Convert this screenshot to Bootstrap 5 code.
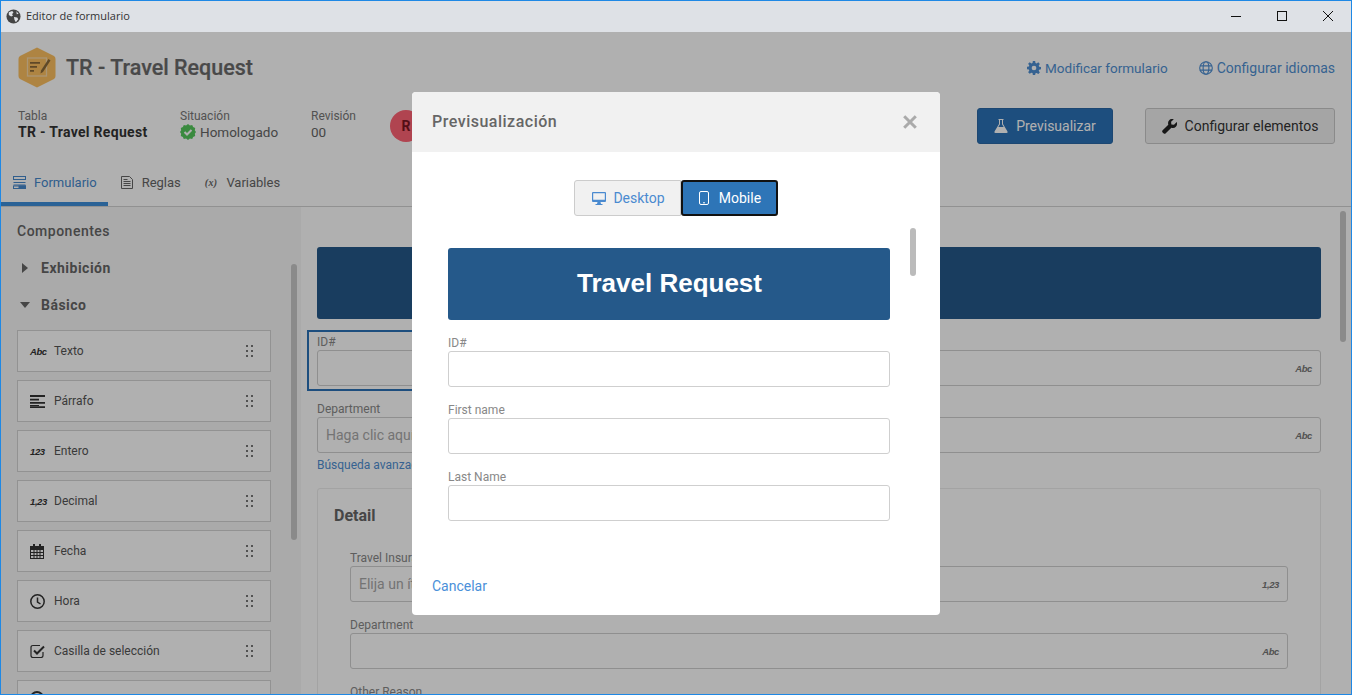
<!DOCTYPE html>
<html lang="es">
<head>
<meta charset="utf-8">
<title>Editor de formulario</title>
<link href="https://cdn.jsdelivr.net/npm/bootstrap@5.3.0/dist/css/bootstrap.min.css" rel="stylesheet">
<style>
html,body{height:100%;margin:0;overflow:hidden}
body{font-family:Roboto,"Liberation Sans",sans-serif;font-size:14px;color:#555;background:#fff}
a{text-decoration:none}
svg{display:block;flex:none}
.win{height:695px;border:1px solid #1e88e5;overflow:hidden;display:flex;flex-direction:column}
.tbar{height:31px;flex:none;background:#dee1e6;color:#333;font-family:"Open Sans","Liberation Sans",sans-serif;font-size:11px;padding:0 0 1px 5px;gap:5px}
.tbar-ctrls{gap:36px;padding-right:18px}
.app{flex:1;min-height:0;position:relative;display:flex;flex-direction:column;background:#fff}
.hd{padding:15px 16px 0 17px;flex:none}
.hd-top{height:41px}
.hd-title{font-size:21.5px;font-weight:500;color:#6b6b6b;line-height:40px;margin-left:10px;padding-top:1px;-webkit-text-stroke:.2px #6b6b6b}
.lnk{color:#4f8fd2;font-size:14px;padding-top:1px}
.lnk-n{font-size:13.5px}
.lnk+.lnk{margin-left:31px}
.meta-row{margin-top:20px;height:36px}
.meta{line-height:16px;font-size:13.5px;color:#666}
.meta small{display:block;font-size:12px;color:#777;line-height:16px}
.meta b{font-weight:700;font-size:14px;color:#333;letter-spacing:.3px}
.m1{width:162px}.m2{width:131px}.m3{width:79px}
.avatar{width:32px;height:32px;border-radius:50%;background:#ff6374;color:#7a1522;font-weight:700;margin-top:2px}
.tool{height:36px;font-size:14px;padding:0;border-radius:3px;gap:8px;white-space:nowrap;--bs-btn-border-radius:3px}
.tool-p{background:#2b72b7;border-color:#2a68a6;color:#fff;width:136px}
.tool-s{background:#f0f0f0;border-color:#c9c9c9;color:#333;width:190px;margin-left:32px}
.tabs{margin-top:21px;height:42px;flex:none;border-bottom:1px solid #d2d2d2}
.tab-i{height:41px;color:#666;padding:0 12px 6px 13px;gap:9px;font-size:13px}
.tab-i.act{color:#4688cc;border-bottom:4px solid #3e8ed9;padding:0 11px 2px 12px;gap:8px}
.tab-v{padding-left:12px}
.tab-x{font-family:"Liberation Serif",serif;font-style:italic;font-weight:700;font-size:10px;color:#666;letter-spacing:.3px}
.bodyrow{flex:1;min-height:0;display:flex}
.side{width:300px;flex:none;background:#f7f7f7;padding:15px 16px 0;position:relative;overflow:hidden}
.side-h{font-weight:500;letter-spacing:.5px;color:#666;line-height:18px;margin-bottom:19px}
.grp{font-weight:700;letter-spacing:.5px;color:#666;line-height:18px;gap:0;margin-bottom:19px}
.grp svg{margin-left:4px;margin-right:12px}
.grp-last{margin-bottom:16px}
.grp-last svg{margin-left:3px;margin-right:11px}
.it{width:254px;height:42px;background:#fff;border:1px solid #d4d4d4;margin-bottom:8px;padding:0 16px 0 12px;font-size:12px;color:#555}
.it-ic{width:24px;font:italic 700 9.5px "Liberation Sans",sans-serif;letter-spacing:-.4px;color:#333;display:flex;align-items:center;flex:none}
.it-cut{padding-top:10px}
.thumb{position:absolute;width:6px;background:#c8c8c8;border-radius:3px}
.th1{left:290px;top:57px;height:276px}
.th2{left:1039px;top:4px;height:131px}
.cont{flex:1;min-width:0;background:#fff;position:relative;overflow:hidden;padding:40px 30px 0 16px}
.bnr{height:72px;background:#25598a;border-radius:3px}
.fld{font-size:12px;line-height:16px;color:#888}
.inp{height:36px;border:1px solid #cfcfcf;border-radius:3px;background:#fff;color:#a8a8a8;font-size:14px;padding:0 8px;gap:8px}
.inp-ic{font:italic 700 9.5px "Liberation Sans",sans-serif;letter-spacing:-.4px;color:#777;margin-left:auto}
.focus-box{border:2px solid #2b72b7;padding:2px 0 3px 8px;margin:11px 0 0 -10px;width:350px;flex:none}
.r1{gap:0}
.r1-rest{flex:1;padding-top:31px}
.dep{margin-top:10px}
.adv{color:#4f8fd2;font-size:12px;line-height:16px;margin-top:4px}
.det{margin-top:15px;border:1px solid #ececec;border-radius:3px;padding:16px 32px 0 32px;height:300px}
.det-h{font-size:16px;font-weight:700;color:#666;line-height:22px;margin:0 0 0 -16px}
.f-a{margin-top:23px}
.f-b{margin-top:15px}
.cover{position:absolute;inset:0;background:rgba(0,0,0,.31);display:flex;justify-content:center;align-items:flex-start;padding-top:60px}
.pv{width:528px;height:523px;border:0;border-radius:4px;background:#fff;overflow:hidden;display:flex;flex-direction:column}
.pv .modal-header{height:60px;flex:none;background:#f1f1f1;border:0;border-radius:0;padding:0 23px 0 20px}
.pv-t{font-size:16px;font-weight:500;letter-spacing:.5px;color:#666;margin:0}
.pv .modal-body{padding:28px 0 0;flex:1;min-height:0;overflow:hidden;position:relative}
.seg .btn{height:36px;font-size:14px;padding:0;display:flex;align-items:center;justify-content:center;gap:7px}
.seg-d{width:107px;background:#f1f1f1;border:1px solid #ccc;color:#4a8ad0;border-radius:3px 0 0 3px!important;padding-left:2px!important}
.seg-m{width:97px;background:#2e75b7;border:2px solid #111;color:#fff;border-radius:3px!important;margin-left:0!important;padding-left:1px!important}
.seg-m:hover,.seg-d:hover{color:inherit}
.pv-scroll{padding:32px 50px 0 36px}
.pv-bnr{height:72px;background:#25598a;border-radius:3px;color:#fff;font-size:26px;font-weight:700;font-family:"Liberation Sans",sans-serif;padding:0 0 2px 1px}
.pv-f{margin-top:15px;font-size:12px;line-height:16px;color:#888}
.th3{left:498px;top:76px;height:48px;background:#bbb}
.pv .modal-footer{height:58px;flex:none;border:0;padding:16px 20px 0;justify-content:flex-start;align-items:flex-start}
.pv .modal-footer a{margin:0;color:#4a90d9;line-height:26px}
</style>
</head>
<body>
<div class="win">
  <div class="tbar d-flex align-items-center">
    <svg width="15" height="15" viewBox="0 0 16 16"><circle cx="8" cy="8" r="7.500" fill="#444"/><path d="M3 3.500 6.500 2 8 3.500 6.500 5.500 7.500 7 5.500 8 3 6.500ZM8.500 8.500l3.500.5 1 2-2.500 3-1.500-2.500ZM11 2.500l2.500 2.500-2 .5Z" fill="#dee1e6"/></svg>
    <span>Editor de formulario</span>
    <div class="ms-auto d-flex align-items-center tbar-ctrls">
      <svg width="10" height="10" viewBox="0 0 10 10"><path d="M0 5.500h10" stroke="#111"/></svg>
      <svg width="10" height="10" viewBox="0 0 10 10"><rect x=".5" y=".5" width="9" height="9" fill="none" stroke="#111"/></svg>
      <svg width="10" height="10" viewBox="0 0 10 10"><path d="M0 0 10 10M10 0 0 10" stroke="#111"/></svg>
    </div>
  </div>
  <div class="app">
    <header class="hd">
      <div class="d-flex align-items-center hd-top">
        <svg width="38" height="41" viewBox="0 0 38 41"><path d="M19 .5 36 9q1.500 1 1.500 3v17q0 2-1.500 3L19 40.500 2 32Q.5 31 .5 29V12Q.5 10 2 9Z" fill="#fcbf60"/><rect x="9.500" y="11" width="19" height="18" fill="none" stroke="#f8d9a8" stroke-width="1.300"/><path d="M12 15h10v1.800H12zM12 19h7v1.800h-7zM12 23h4v1.800h-4z" fill="#8a6a3a"/><path d="M30.500 12 32.500 13.500 25 25 22.500 26.500 23 23.500Z" fill="#8a6a3a"/></svg>
        <div class="hd-title">TR - Travel Request</div>
        <div class="ms-auto d-flex align-items-center">
          <a class="lnk lnk-n d-flex align-items-center gap-1" href="#"><svg width="14" height="14" viewBox="0 0 16 16" fill="#4f8fd2"><path d="M6.700 0h2.600l.4 2.200 1.300.6L12.900 1.500l1.800 1.800-1.300 1.900.5 1.300 2.100.4v2.600l-2.100.4-.5 1.300 1.300 1.900-1.800 1.800-1.900-1.300-1.300.5L9.300 16H6.700l-.4-2.200-1.300-.5-1.900 1.300-1.800-1.800 1.300-1.900-.5-1.300L0 9.300V6.700l2.100-.4.500-1.300-1.300-1.900 1.800-1.800L5 2.800l1.300-.6ZM8 5.300a2.700 2.700 0 1 0 0 5.400 2.700 2.700 0 0 0 0-5.400Z" fill-rule="evenodd"/></svg>Modificar formulario</a>
          <a class="lnk d-flex align-items-center gap-1" href="#"><svg width="14" height="14" viewBox="0 0 16 16" fill="none" stroke="#4f8fd2" stroke-width="1.300"><circle cx="8" cy="8" r="7.200"/><ellipse cx="8" cy="8" rx="3.300" ry="7.200"/><path d="M1 5.500h14M1 10.500h14"/></svg>Configurar idiomas</a>
        </div>
      </div>
      <div class="d-flex meta-row">
        <div class="meta m1"><small>Tabla</small><b>TR - Travel Request</b></div>
        <div class="meta m2"><small>Situación</small><span class="d-flex align-items-center gap-1"><svg width="16" height="16" viewBox="0 0 16 16"><path d="M8 0l1.900 1.400 2.300-.4.900 2.100 2.100.9-.4 2.300L16 8l-1.200 1.700.4 2.300-2.100.9-.9 2.100-2.300-.4L8 16l-1.900-1.400-2.300.4-.9-2.100-2.100-.9.4-2.300L0 8l1.200-1.700L.8 4l2.100-.9.9-2.100 2.300.4Z" fill="#55c85c"/><path d="M4.500 8l2.500 2.500 4.500-4.500" fill="none" stroke="#fff" stroke-width="2"/></svg>Homologado</span></div>
        <div class="meta m3"><small>Revisión</small>00</div>
        <div class="avatar d-flex align-items-center justify-content-center">R</div>
        <button class="btn tool tool-p ms-auto d-flex align-items-center justify-content-center" type="button"><svg width="14" height="14" viewBox="0 0 14 14" fill="#fff"><path d="M4.500 0h5v1H9v4l4.500 7.500q.5 1.500-1 1.500h-11q-1.500 0-1-1.500L5 5V1h-.5ZM6 1v4.300L4.300 8h5.400L8 5.300V1Z" fill-rule="evenodd"/><path d="M3.500 8.500h7L12.500 13h-11Z"/></svg>Previsualizar</button>
        <button class="btn tool tool-s d-flex align-items-center justify-content-center" type="button"><svg width="15" height="15" viewBox="0 0 16 16" fill="#222"><path d="M15.700 3.300 12.800 6.200 10 5.800 9.700 3 12.600.2Q9.500-.6 7.700 1.200 5.900 3 6.700 6L.7 12q-1.100 1.200 0 2.400l.9.900q1.200 1.100 2.400 0l6-6q3 .8 4.800-1 1.800-1.800 1-5Z"/></svg>Configurar elementos</button>
      </div>
    </header>
    <nav class="tabs d-flex">
      <a href="#" class="tab-i act d-flex align-items-center"><svg width="13" height="13" viewBox="0 0 13 13" fill="none" stroke="#4688cc"><rect x=".5" y=".5" width="12" height="3"/><path d="M.5 6.500h12M.5 9h12"/><rect x=".5" y="10" width="12" height="2.500"/><rect x="6" y="10" width="6.500" height="2.500" fill="#4688cc"/></svg>Formulario</a>
      <a href="#" class="tab-i d-flex align-items-center"><svg width="12" height="13" viewBox="0 0 12 13" fill="none" stroke="#666"><path d="M.5.500h8l3 3v9H.5ZM2.500 3.500h4M2.500 5.500h7M2.500 7.500h7M2.500 9.500h7"/></svg>Reglas</a>
      <a href="#" class="tab-i tab-v d-flex align-items-center"><span class="tab-x">(x)</span>Variables</a>
    </nav>
    <div class="bodyrow">
      <aside class="side">
        <div class="side-h">Componentes</div>
        <div class="grp d-flex align-items-center"><svg width="8" height="10" viewBox="0 0 8 10"><path d="M1 0 7 5 1 10Z" fill="#666"/></svg>Exhibición</div>
        <div class="grp grp-last d-flex align-items-center"><svg width="10" height="6" viewBox="0 0 10 6"><path d="M0 0H10L5 6Z" fill="#666"/></svg>Básico</div>
        <div class="it d-flex align-items-center"><span class="it-ic">Abc</span>Texto<svg class="ms-auto" width="8" height="12" viewBox="0 0 8 12" fill="#777"><path d="M0 0h2v2H0zM5 0h2v2H5zM0 5h2v2H0zM5 5h2v2H5zM0 10h2v2H0zM5 10h2v2H5z"/></svg></div>
        <div class="it d-flex align-items-center"><span class="it-ic"><svg width="15" height="13" viewBox="0 0 15 13" fill="#333"><path d="M0 0h15v2H0zM0 3.700h9v1.700H0zM0 7h15v1.700H0zM0 10h9v1H0zM0 11.300h15V13H0z"/></svg></span>Párrafo<svg class="ms-auto" width="8" height="12" viewBox="0 0 8 12" fill="#777"><path d="M0 0h2v2H0zM5 0h2v2H5zM0 5h2v2H0zM5 5h2v2H5zM0 10h2v2H0zM5 10h2v2H5z"/></svg></div>
        <div class="it d-flex align-items-center"><span class="it-ic">123</span>Entero<svg class="ms-auto" width="8" height="12" viewBox="0 0 8 12" fill="#777"><path d="M0 0h2v2H0zM5 0h2v2H5zM0 5h2v2H0zM5 5h2v2H5zM0 10h2v2H0zM5 10h2v2H5z"/></svg></div>
        <div class="it d-flex align-items-center"><span class="it-ic">1,23</span>Decimal<svg class="ms-auto" width="8" height="12" viewBox="0 0 8 12" fill="#777"><path d="M0 0h2v2H0zM5 0h2v2H5zM0 5h2v2H0zM5 5h2v2H5zM0 10h2v2H0zM5 10h2v2H5z"/></svg></div>
        <div class="it d-flex align-items-center"><span class="it-ic"><svg width="14" height="15" viewBox="0 0 14 15" fill="#333"><path d="M3 0h2v2h4V0h2v2h3v13H0V2h3ZM1 6v8h12V6ZM1 8h12v1H1zM1 11h12v1H1zM3.500 6h1v8h-1zM6.500 6h1v8h-1zM9.500 6h1v8h-1z"/></svg></span>Fecha<svg class="ms-auto" width="8" height="12" viewBox="0 0 8 12" fill="#777"><path d="M0 0h2v2H0zM5 0h2v2H5zM0 5h2v2H0zM5 5h2v2H5zM0 10h2v2H0zM5 10h2v2H5z"/></svg></div>
        <div class="it d-flex align-items-center"><span class="it-ic"><svg width="15" height="15" viewBox="0 0 15 15" fill="none" stroke="#333" stroke-width="1.500"><circle cx="7.500" cy="7.500" r="6.700"/><path d="M7.500 3.500V8l3 2"/></svg></span>Hora<svg class="ms-auto" width="8" height="12" viewBox="0 0 8 12" fill="#777"><path d="M0 0h2v2H0zM5 0h2v2H5zM0 5h2v2H0zM5 5h2v2H5zM0 10h2v2H0zM5 10h2v2H5z"/></svg></div>
        <div class="it d-flex align-items-center"><span class="it-ic"><svg width="15" height="14" viewBox="0 0 15 14" fill="none" stroke="#333"><path d="M13 8v3.500q0 2-2 2H3q-2 0-2-2v-8q0-2 2-2h7" stroke-width="1.200"/><path d="M4 6.500l3 3 7-7" stroke-width="2"/></svg></span>Casilla de selección<svg class="ms-auto" width="8" height="12" viewBox="0 0 8 12" fill="#777"><path d="M0 0h2v2H0zM5 0h2v2H5zM0 5h2v2H0zM5 5h2v2H5zM0 10h2v2H0zM5 10h2v2H5z"/></svg></div>
        <div class="it d-flex align-items-start"><span class="it-ic it-cut"><svg width="14" height="14" viewBox="0 0 14 14"><circle cx="7" cy="7" r="6" fill="none" stroke="#333" stroke-width="2"/></svg></span></div>
        <div class="thumb th1"></div>
      </aside>
      <main class="cont">
        <div class="bnr"></div>
        <div class="d-flex r1">
          <div class="fld focus-box"><div>ID#</div><div class="inp d-flex align-items-center"></div></div>
          <div class="fld r1-rest"><div class="inp d-flex align-items-center"><span class="inp-ic">Abc</span></div></div>
        </div>
        <div class="fld dep">Department</div>
        <div class="inp d-flex align-items-center">Haga clic aquí<span class="inp-ic">Abc</span></div>
        <div class="adv">Búsqueda avanzada</div>
        <section class="det">
          <h5 class="det-h">Detail</h5>
          <div class="fld f-a">Travel Insurance</div>
          <div class="inp d-flex align-items-center">Elija un ítem<span class="inp-ic">1,23</span></div>
          <div class="fld f-b">Department</div>
          <div class="inp d-flex align-items-center"><span class="inp-ic">Abc</span></div>
          <div class="fld f-b">Other Reason</div>
        </section>
        <div class="thumb th2"></div>
      </main>
    </div>
    <div class="cover">
      <div class="modal-content pv">
        <div class="modal-header">
          <h5 class="pv-t">Previsualización</h5>
          <svg class="ms-auto" width="14" height="14" viewBox="0 0 14 14"><path d="M1.200 1.200 12.800 12.800M12.800 1.200 1.200 12.800" stroke="#aaa" stroke-width="3"/></svg>
        </div>
        <div class="modal-body">
          <div class="d-flex justify-content-center">
            <div class="btn-group seg" role="group">
              <button type="button" class="btn seg-d"><svg width="14" height="13" viewBox="0 0 14 13" fill="#4a8ad0"><path d="M1 0h12q1 0 1 1v8q0 1-1 1H8.500l.5 2h1.500v1h-7v-1H5l.5-2H1q-1 0-1-1V1q0-1 1-1Zm.2 1.200v6.500h11.600V1.200Z" fill-rule="evenodd"/></svg>Desktop</button>
              <button type="button" class="btn seg-m"><svg width="10" height="14" viewBox="0 0 10 14" fill="none" stroke="#fff"><rect x=".5" y=".5" width="9" height="13" rx="1.500"/><path d="M4 11.800h2"/></svg><span>&#8201;Mobile</span></button>
            </div>
          </div>
          <div class="pv-scroll">
            <div class="pv-bnr d-flex align-items-center justify-content-center">Travel Request</div>
            <div class="pv-f"><div>ID#</div><div class="inp"></div></div>
            <div class="pv-f"><div>First name</div><div class="inp"></div></div>
            <div class="pv-f"><div>Last Name</div><div class="inp"></div></div>
          </div>
          <div class="thumb th3"></div>
        </div>
        <div class="modal-footer"><a href="#">Cancelar</a></div>
      </div>
    </div>
  </div>
</div>
<script src="https://cdn.jsdelivr.net/npm/bootstrap@5.3.0/dist/js/bootstrap.bundle.min.js"></script>
</body>
</html>
